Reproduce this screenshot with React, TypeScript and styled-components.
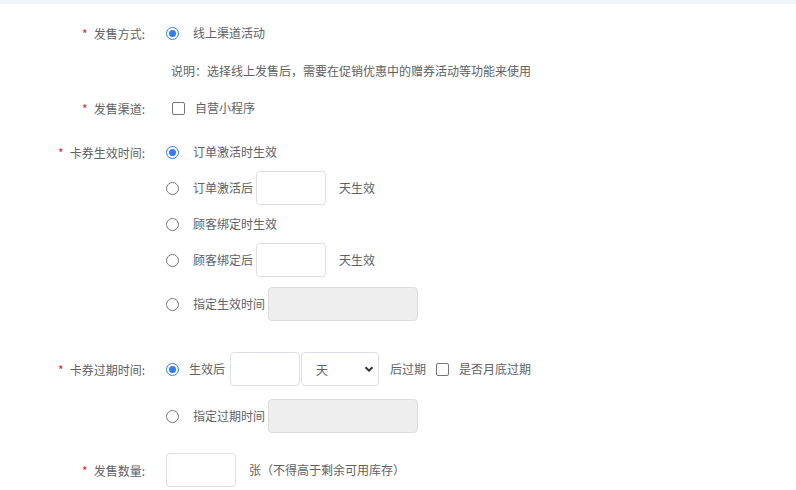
import React from "react";
import styled, { createGlobalStyle } from "styled-components";

const GlobalStyle = createGlobalStyle`
  html, body { margin: 0; padding: 0; background: #ffffff; }
  body {
    font-family: "Noto Sans CJK SC", "Noto Sans", "Liberation Sans", sans-serif;
    font-size: 12px;
    color: #606266;
  }
  * { box-sizing: border-box; }
`;

const Page = styled.div`
  width: 796px;
  height: 490px;
  overflow: hidden;
  background: #ffffff;
`;

const TopStrip = styled.div`
  height: 4px;
  background: #f2f3f5;
`;

const Form = styled.div`
  display: flex;
  flex-direction: column;
  padding-top: 12px;
`;

const FormItem = styled.div<{ $mt?: number }>`
  display: grid;
  grid-template-columns: 145px 1fr;
  column-gap: 21px;
  margin-top: ${(p) => p.$mt ?? 0}px;
`;

const Label = styled.div`
  height: 34px;
  display: flex;
  align-items: center;
  justify-content: flex-end;
  font-size: 12px;
  color: #606266;
  white-space: nowrap;
`;

const Star = styled.span`
  color: #e8252a;
  margin-right: 6px;
  font-size: 12px;
`;

const Content = styled.div<{ $gap?: number }>`
  display: flex;
  flex-direction: column;
  gap: ${(p) => p.$gap ?? 0}px;
`;

const Row = styled.div<{ $mt?: number }>`
  display: flex;
  align-items: center;
  min-height: 34px;
  margin-top: ${(p) => p.$mt ?? 0}px;
  white-space: nowrap;
`;

const Text = styled.span<{ $ml?: number }>`
  font-size: 12px;
  color: #606266;
  line-height: 20px;
  margin-left: ${(p) => p.$ml ?? 0}px;
`;

const Description = styled.div`
  height: 20px;
  display: flex;
  align-items: center;
  padding-left: 5px;
  font-size: 12px;
  color: #606266;
  white-space: nowrap;
`;

const RadioCircle = styled.span<{ $checked?: boolean }>`
  width: 13px;
  height: 13px;
  border-radius: 50%;
  flex: none;
  border: 1px solid ${(p) => (p.$checked ? "#2f7ef5" : "#767676")};
  background: #ffffff;
  display: flex;
  align-items: center;
  justify-content: center;
  &::after {
    content: "";
    display: ${(p) => (p.$checked ? "block" : "none")};
    width: 7px;
    height: 7px;
    border-radius: 50%;
    background: #2f7ef5;
  }
`;

const CheckBox = styled.span<{ $ml?: number }>`
  width: 13px;
  height: 13px;
  flex: none;
  border: 1px solid #767676;
  border-radius: 2px;
  background: #ffffff;
  margin-left: ${(p) => p.$ml ?? 0}px;
`;

const Input = styled.div<{ $w: number; $ml?: number; $disabled?: boolean }>`
  width: ${(p) => p.$w}px;
  height: 34px;
  flex: none;
  border: 1px solid ${(p) => (p.$disabled ? "#dcdcdc" : "#dcdfe6")};
  border-radius: 4px;
  background: ${(p) => (p.$disabled ? "#eeeeee" : "#ffffff")};
  margin-left: ${(p) => p.$ml ?? 0}px;
`;

const Select = styled.div<{ $ml?: number }>`
  width: 78px;
  height: 34px;
  flex: none;
  border: 1px solid #dcdfe6;
  border-radius: 4px;
  background: #ffffff;
  margin-left: ${(p) => p.$ml ?? 0}px;
  display: flex;
  align-items: center;
  justify-content: space-between;
  padding: 0 4px 0 14px;
  font-size: 12px;
  color: #606266;
`;

const Chevron = () => (
  <svg width="10" height="10" viewBox="0 0 10 10">
    <path d="M1.5 3.2 L5 6.7 L8.5 3.2" fill="none" stroke="#333333" strokeWidth="2" />
  </svg>
);

export default function App() {
  return (
    <Page>
      <GlobalStyle />
      <TopStrip />
      <Form>
        <FormItem>
          <Label>
            <Star>*</Star>发售方式:
          </Label>
          <Content>
            <Row>
              <RadioCircle $checked />
              <Text $ml={14}>线上渠道活动</Text>
            </Row>
          </Content>
        </FormItem>

        <FormItem $mt={10}>
          <div />
          <Description>说明：选择线上发售后，需要在促销优惠中的赠券活动等功能来使用</Description>
        </FormItem>

        <FormItem $mt={11}>
          <Label>
            <Star>*</Star>发售渠道:
          </Label>
          <Content>
            <Row>
              <CheckBox $ml={6} />
              <Text $ml={10}>自营小程序</Text>
            </Row>
          </Content>
        </FormItem>

        <FormItem $mt={10}>
          <Label>
            <Star>*</Star>卡券生效时间:
          </Label>
          <Content $gap={2}>
            <Row>
              <RadioCircle $checked />
              <Text $ml={14}>订单激活时生效</Text>
            </Row>
            <Row>
              <RadioCircle />
              <Text $ml={14}>订单激活后</Text>
              <Input $w={70} $ml={3} />
              <Text $ml={13}>天生效</Text>
            </Row>
            <Row>
              <RadioCircle />
              <Text $ml={14}>顾客绑定时生效</Text>
            </Row>
            <Row>
              <RadioCircle />
              <Text $ml={14}>顾客绑定后</Text>
              <Input $w={70} $ml={3} />
              <Text $ml={13}>天生效</Text>
            </Row>
            <Row $mt={8}>
              <RadioCircle />
              <Text $ml={14}>指定生效时间</Text>
              <Input $w={150} $ml={3} $disabled />
            </Row>
          </Content>
        </FormItem>

        <FormItem $mt={31}>
          <Label>
            <Star>*</Star>卡券过期时间:
          </Label>
          <Content $gap={13}>
            <Row>
              <RadioCircle $checked />
              <Text $ml={10}>生效后</Text>
              <Input $w={70} $ml={5} />
              <Select $ml={1}>
                <span>天</span>
                <Chevron />
              </Select>
              <Text $ml={11}>后过期</Text>
              <CheckBox $ml={10} />
              <Text $ml={10}>是否月底过期</Text>
            </Row>
            <Row>
              <RadioCircle />
              <Text $ml={14}>指定过期时间</Text>
              <Input $w={150} $ml={3} $disabled />
            </Row>
          </Content>
        </FormItem>

        <FormItem $mt={20}>
          <Label>
            <Star>*</Star>发售数量:
          </Label>
          <Content>
            <Row>
              <Input $w={70} />
              <Text $ml={13}>张（不得高于剩余可用库存）</Text>
            </Row>
          </Content>
        </FormItem>
      </Form>
    </Page>
  );
}
